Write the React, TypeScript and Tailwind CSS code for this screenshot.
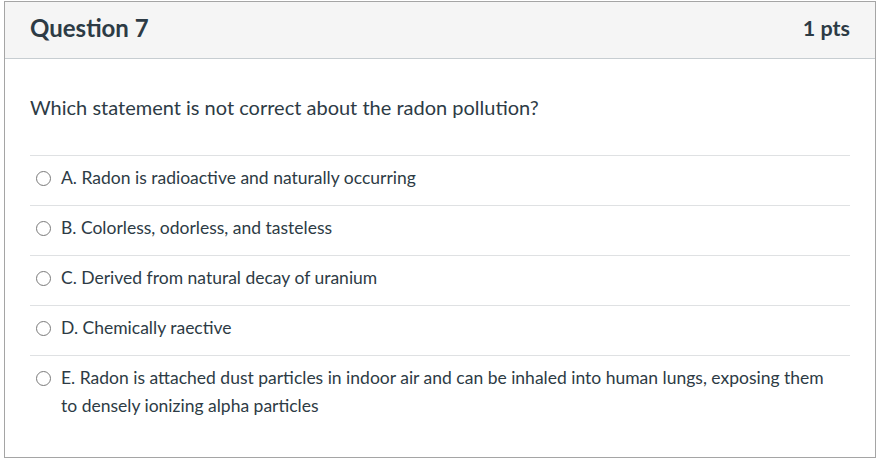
const answers = [
  'A. Radon is radioactive and naturally occurring',
  'B. Colorless, odorless, and tasteless',
  'C. Derived from natural decay of uranium',
  'D. Chemically raective',
  'E. Radon is attached dust particles in indoor air and can be inhaled into human lungs, exposing them to densely ionizing alpha particles',
];

export default function App() {
  return (
    <div className="bg-white w-[885px] h-[463px] pt-[1px] pl-[4px]" style={{ fontFamily: 'Lato, "Liberation Sans", sans-serif' }}>
      <div className="w-[872px] h-[457px] border border-[#a5a5a5] text-[#2d3b45]">
        <div className="h-[57px] bg-[#f5f5f5] border-b border-[#c7cdd1] flex items-center justify-between px-[25px] pb-[4px]">
          <h2 className="text-[24px] font-bold">Question 7</h2>
          <span className="text-[21.5px] font-bold text-[#2d3b45]">1 pts</span>
        </div>
        <div className="px-[25px] pt-[34px]">
          <p className="text-[20px] leading-[28px]">Which statement is not correct about the radon pollution?</p>
          <div className="mt-[34px]">
            {answers.map(a => (
              <div key={a} className="border-t border-[#dfe1e3] flex items-start gap-[10px] pt-[8px] pb-[13px] pl-[6px]">
                <span className="mt-[7px] w-[15px] h-[15px] shrink-0 rounded-full border border-[#7a7a7a] bg-white" />
                <span className="text-[17.5px] leading-[28px] pr-[20px]">{a}</span>
              </div>
            ))}
          </div>
        </div>
      </div>
    </div>
  );
}
